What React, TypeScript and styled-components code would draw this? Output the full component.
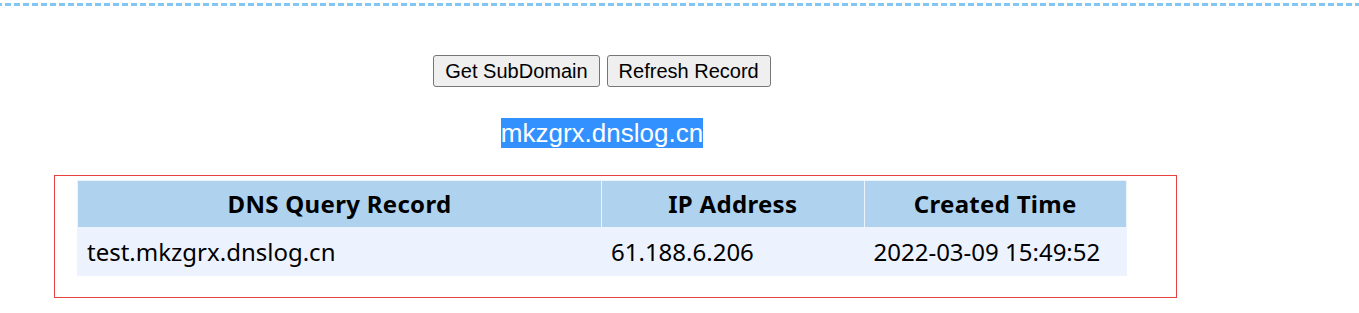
import styled, { createGlobalStyle } from "styled-components";

const GlobalStyle = createGlobalStyle`
  html,
  body {
    margin: 0;
    padding: 0;
    background: #ffffff;
  }
`;

const DashedRule = styled.div`
  height: 3px;
  margin-top: 3px;
  background: repeating-linear-gradient(
    to right,
    #84c6f3 0 6px,
    transparent 6px 9px
  );
  background-position: -4px 0;
`;

const Main = styled.main`
  width: 1204px;
  padding-top: 49px;
`;

const ButtonRow = styled.div`
  display: flex;
  justify-content: center;
  gap: 7px;
`;

const ActionButton = styled.button`
  height: 32px;
  padding: 0 11px;
  font-family: "Liberation Sans", Arial, sans-serif;
  font-size: 20px;
  color: #000;
  background: #efefef;
  border: 1px solid #767676;
  border-radius: 3px;
`;

const DomainLine = styled.div`
  margin-top: 31px;
  text-align: center;
  font-family: "Liberation Sans", Arial, sans-serif;
  font-size: 26px;
  line-height: 31px;
  span {
    background: #3390ff;
    color: #ffffff;
  }
`;

const RecordBox = styled.div`
  box-sizing: border-box;
  width: 1123px;
  height: 123px;
  margin: 26px 0 0 54px;
  padding: 4px 0 0 22px;
  border: 1px solid #e8423f;
`;

const RecordTable = styled.table`
  width: 1050px;
  border-collapse: separate;
  border-spacing: 1px;
  background: #edf3fe;
  font-family: "Noto Sans", "Open Sans", sans-serif;
  font-size: 24px;
  line-height: 32px;
  color: #000;
  th {
    height: 46px;
    padding: 0;
    background: #afd3ee;
    font-weight: 700;
    letter-spacing: 0.3px;
    text-align: center;
  }
  td {
    height: 47px;
    padding: 0 0 0 9px;
    text-align: left;
  }
`;

const Col = styled.col<{ $w: string }>`
  width: ${(p) => p.$w};
`;

const records = [
  { host: "test.mkzgrx.dnslog.cn", ip: "61.188.6.206", time: "2022-03-09 15:49:52" },
];

export default function App() {
  return (
    <>
      <GlobalStyle />
      <DashedRule />
      <Main>
        <ButtonRow>
          <ActionButton type="button">Get SubDomain</ActionButton>
          <ActionButton type="button">Refresh Record</ActionButton>
        </ButtonRow>
        <DomainLine>
          <span>mkzgrx.dnslog.cn</span>
        </DomainLine>
        <RecordBox>
          <RecordTable>
            <colgroup>
              <Col $w="50%" />
              <Col $w="25%" />
              <Col $w="25%" />
            </colgroup>
            <thead>
              <tr>
                <th>DNS Query Record</th>
                <th>IP Address</th>
                <th>Created Time</th>
              </tr>
            </thead>
            <tbody>
              {records.map((r) => (
                <tr key={r.host}>
                  <td>{r.host}</td>
                  <td>{r.ip}</td>
                  <td>{r.time}</td>
                </tr>
              ))}
            </tbody>
          </RecordTable>
        </RecordBox>
      </Main>
    </>
  );
}
